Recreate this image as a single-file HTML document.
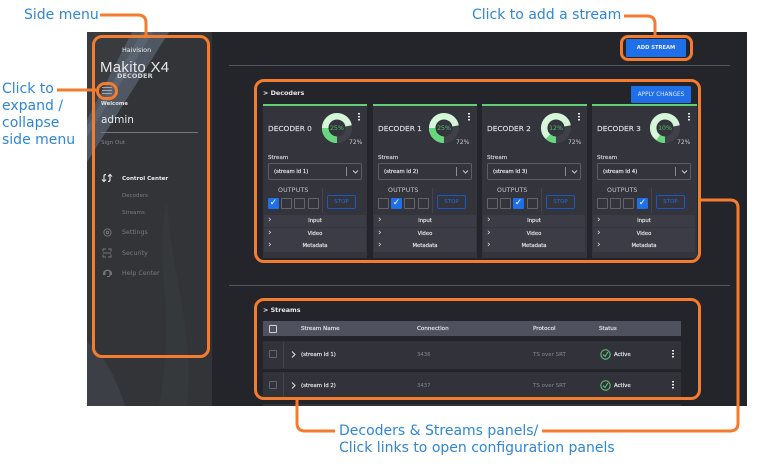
<!DOCTYPE html>
<html><head><meta charset="utf-8">
<style>
html,body{margin:0;padding:0;background:#fff}
body{width:774px;height:476px;position:relative;overflow:hidden;font-family:"DejaVu Sans","Liberation Sans",sans-serif}
div,span{position:absolute;white-space:nowrap;box-sizing:border-box}
.ann{color:#2e86d6;font-size:14px;line-height:17px;font-family:"DejaVu Sans",sans-serif}
.o{border:3px solid #f47c2e;border-radius:10px}
.card{top:104px;width:104px;height:154px;background:#34353c;border-top:2px solid #62cf74}
.dn{left:5px;top:18px;font-size:7.400px;color:#dcdce0;-webkit-text-stroke:.15px #dcdce0}
.pct{left:86px;top:33px;font-size:6px;color:#c8c8cc}
.st{left:5px;top:49px;font-size:5.600px;color:#d8d8dc;-webkit-text-stroke:.15px #d8d8dc}
.sel{left:5px;top:57px;width:94px;height:17px;border:1px solid #5c5d66;border-radius:2px}
.sel b{position:absolute;left:5px;top:5px;font-weight:normal;font-size:5.300px;color:#e4e4e8;white-space:nowrap;-webkit-text-stroke:.2px #e4e4e8}
.sel i{position:absolute;left:77px;top:3px;width:1px;height:9px;background:#8a8b92}
.out{left:15px;top:81px;font-size:6.200px;letter-spacing:.2px;color:#c8c8cc}
.cb{top:92px;width:11px;height:11px;border:1px solid #63646c;border-radius:1px}
.cb.on{background:#1f6fe8;border-color:#1f6fe8;color:#fff;font-size:9px;line-height:9px;text-align:center}
.vs{left:59px;top:82px;width:1px;height:25px;background:#44454c}
.stop{left:64px;top:89px;width:29px;height:14px;border:1px solid #1d57bf;border-radius:2px;color:#1f6fe8;font-size:5.500px;line-height:13px;text-align:center}
.acc{left:1px;width:102px;height:12px;background:#3b3c45;border-radius:1px;color:#e0e0e4;font-size:5.300px;line-height:13px;text-align:center;-webkit-text-stroke:.2px #e0e0e4}
.acc u{position:absolute;left:4px;top:-1px;text-decoration:none;font-size:9px;font-weight:normal;-webkit-text-stroke:0}
.dots{left:95px;top:7px;width:2px;height:8px;background:repeating-linear-gradient(#e8e8ea 0 1.500px,transparent 1.500px 3px)}
svg{position:absolute}
.row{left:263px;width:418px;height:28px;background:#32333a}
.row .c{left:6px;top:9px;width:8px;height:8px;border:1px solid #62636b;border-radius:1px}
.row .v{left:20px;top:1px;width:1px;height:26px;background:#45464d}
.row .nm{left:38px;top:11px;font-size:5.400px;color:#e4e4e8;-webkit-text-stroke:.2px #e4e4e8}
.row .cn{left:154px;top:11px;font-size:5.300px;color:#85868e}
.row .pr{left:270px;top:11px;font-size:5.500px;color:#85868e}
.row .ac{left:351px;top:11px;font-size:5.400px;color:#e4e4e8;-webkit-text-stroke:.2px #e4e4e8}
.row .dots{left:409px;top:9px;height:9px}
.th{top:326px;font-size:5.600px;color:#e0e0e4;-webkit-text-stroke:.2px #e0e0e4}
.menu{font-size:6.300px;color:#7a7b81}
</style></head><body>

<div style="left:87px;top:32px;width:660px;height:374px;background:#24252a"></div>

<div style="left:87px;top:32px;width:125px;height:374px;background:#333437;overflow:hidden">
<svg width="125" height="374" viewBox="0 0 125 374">
<polygon points="0,0 45,0 0,90" fill="#3a3b3f"/>
<polygon points="45,0 82,0 0,130 0,88" fill="#4f5862"/>
<polygon points="55,0 66,0 0,105 0,95" fill="#5f6a76" opacity=".7"/>
<path d="M80 170C66 230 90 280 72 374L100 374C108 300 84 240 80 170Z" fill="#3a3d41" opacity=".5"/>
<path d="M0 310C20 325 30 350 38 374L0 374Z" fill="#40454b" opacity=".7"/>
</svg>
</div>

<div style="left:122px;top:46px;font-size:6.400px;color:#f0f0f2">Haivision</div>
<div style="left:100px;top:59px;font-size:15px;color:#e8e8ea;font-family:'Liberation Sans',sans-serif;letter-spacing:.3px">Makito X4</div>
<div style="left:117px;top:72px;font-size:6.500px;font-weight:bold;color:#d4d4d8;letter-spacing:.1px">DECODER</div>
<div style="left:102px;top:87px;width:10px;height:1px;background:#a6a7ac"></div>
<div style="left:102px;top:90px;width:10px;height:1px;background:#a6a7ac"></div>
<div style="left:102px;top:93px;width:10px;height:1px;background:#a6a7ac"></div>
<div style="left:101px;top:101px;font-size:5.300px;font-weight:bold;color:#e0e0e4">Welcome</div>
<div style="left:101px;top:114px;font-size:10.500px;color:#e8e8ea">admin</div>
<div style="left:101px;top:132px;width:97px;height:1px;background:#75767c"></div>
<div style="left:101px;top:140px;font-size:5.600px;color:#85868c">Sign Out</div>

<svg style="left:101px;top:172px" width="12" height="12" viewBox="0 0 12 12" fill="none" stroke="#e0e0e4" stroke-width="1.200"><path d="M1 7.500L3 9.500L5 7.500M3 9.500V4C3 3 4 2.500 5 2.500M7 9.500C8 9.500 9 9 9 8V2.500M7 4.500L9 2.500L11 4.500"/></svg>
<div style="left:122px;top:176px;font-size:5.600px;font-weight:bold;color:#eeeef0">Control Center</div>
<div class="menu" style="left:122px;top:193px;font-size:5.500px">Decoders</div>
<div class="menu" style="left:122px;top:210px;font-size:5.500px">Streams</div>
<svg style="left:102px;top:227px" width="11" height="11" viewBox="0 0 11 11" fill="none" stroke="#74757b"><circle cx="5.500" cy="5.500" r="3.600"/><circle cx="5.500" cy="5.500" r="1.200"/></svg>
<div class="menu" style="left:122px;top:229px">Settings</div>
<svg style="left:102px;top:248px" width="10" height="10" viewBox="0 0 10 10" fill="none" stroke="#74757b"><path d="M1 3.500V1H4M6 1H9V3.500M1 6.500V9H4M6 9H9V6.500M1 5H9"/></svg>
<div class="menu" style="left:122px;top:250px">Security</div>
<svg style="left:102px;top:268px" width="11" height="11" viewBox="0 0 11 11" fill="#74757b"><path d="M1 5.500C1 0.500 10 0.500 10 5.500V7H8.500L8 9H5V8H7.500V4C7 2.500 4 2.500 3.500 4V7H1Z"/></svg>
<div class="menu" style="left:122px;top:270px">Help Center</div>

<div style="left:626px;top:39px;width:60px;height:18px;background:#1f6fe8;border-radius:1px;color:#e8f0ff;font-size:5.200px;font-weight:bold;line-height:19px;text-align:center">ADD STREAM</div>
<div style="left:229px;top:65px;width:501px;height:1px;background:#55565c"></div>
<div style="left:229px;top:285px;width:501px;height:1px;background:#55565c"></div>

<div style="left:263px;top:89px;font-size:6.400px;font-weight:bold;color:#e8e8ea">&gt; Decoders</div>
<div style="left:631px;top:86px;width:60px;height:17px;background:#1f6fe8;border-radius:1px;color:#dfe9ff;font-size:5.700px;line-height:18px;text-align:center">APPLY CHANGES</div>

<!-- card 0 -->
<div class="card" style="left:263px">
<div class="dn">DECODER 0</div><div class="dots"></div>
<svg style="left:58px;top:6px" width="32" height="32" viewBox="0 0 32 32" fill="none" stroke-width="6.500"><circle cx="16" cy="16" r="11.800" stroke="#3f4048"/><circle cx="16" cy="16" r="11.800" stroke="#d6f6da" pathLength="100" stroke-dasharray="72 100" transform="rotate(90 16 16)"/><circle cx="16" cy="16" r="11.800" stroke="#66d77c" pathLength="100" stroke-dasharray="25 100" transform="rotate(90 16 16)"/><text x="16" y="18" text-anchor="middle" font-size="6.200" stroke="none" fill="#4fc267" font-family="DejaVu Sans">25%</text></svg>
<div class="pct">72%</div><div class="st">Stream</div>
<div class="sel"><b>(stream id 1)</b><i></i><svg style="left:83px;top:5px" width="7" height="6" viewBox="0 0 7 6" fill="none" stroke="#c8c8cc"><path d="M1 1.500L3.500 4L6 1.500"/></svg></div>
<div class="out">OUTPUTS</div>
<div class="cb on" style="left:5px">✓</div><div class="cb" style="left:18px"></div><div class="cb" style="left:31px"></div><div class="cb" style="left:45px"></div>
<div class="vs"></div><div class="stop">STOP</div>
<div class="acc" style="top:109px"><u>›</u>Input</div><div class="acc" style="top:122px"><u>›</u>Video</div><div class="acc" style="top:134px"><u>›</u>Metadata</div>
</div>

<!-- card 1 -->
<div class="card" style="left:373px">
<div class="dn">DECODER 1</div><div class="dots"></div>
<svg style="left:55px;top:6px" width="32" height="32" viewBox="0 0 32 32" fill="none" stroke-width="6.500"><circle cx="16" cy="16" r="11.800" stroke="#3f4048"/><circle cx="16" cy="16" r="11.800" stroke="#d6f6da" pathLength="100" stroke-dasharray="72 100" transform="rotate(90 16 16)"/><circle cx="16" cy="16" r="11.800" stroke="#66d77c" pathLength="100" stroke-dasharray="25 100" transform="rotate(90 16 16)"/><text x="16" y="18" text-anchor="middle" font-size="6.200" stroke="none" fill="#4fc267" font-family="DejaVu Sans">25%</text></svg>
<div class="pct" style="left:83px">72%</div><div class="st">Stream</div>
<div class="sel"><b>(stream id 2)</b><i></i><svg style="left:83px;top:5px" width="7" height="6" viewBox="0 0 7 6" fill="none" stroke="#c8c8cc"><path d="M1 1.500L3.500 4L6 1.500"/></svg></div>
<div class="out">OUTPUTS</div>
<div class="cb" style="left:5px"></div><div class="cb on" style="left:18px">✓</div><div class="cb" style="left:31px"></div><div class="cb" style="left:45px"></div>
<div class="vs"></div><div class="stop">STOP</div>
<div class="acc" style="top:109px"><u>›</u>Input</div><div class="acc" style="top:122px"><u>›</u>Video</div><div class="acc" style="top:134px"><u>›</u>Metadata</div>
</div>

<!-- card 2 -->
<div class="card" style="left:482px;width:105px">
<div class="dn">DECODER 2</div><div class="dots" style="left:96px"></div>
<svg style="left:58px;top:6px" width="32" height="32" viewBox="0 0 32 32" fill="none" stroke-width="6.500"><circle cx="16" cy="16" r="11.800" stroke="#3f4048"/><circle cx="16" cy="16" r="11.800" stroke="#d6f6da" pathLength="100" stroke-dasharray="72 100" transform="rotate(90 16 16)"/><circle cx="16" cy="16" r="11.800" stroke="#66d77c" pathLength="100" stroke-dasharray="12 100" transform="rotate(90 16 16)"/><text x="16" y="18" text-anchor="middle" font-size="6.200" stroke="none" fill="#4fc267" font-family="DejaVu Sans">12%</text></svg>
<div class="pct">72%</div><div class="st">Stream</div>
<div class="sel"><b>(stream id 3)</b><i></i><svg style="left:83px;top:5px" width="7" height="6" viewBox="0 0 7 6" fill="none" stroke="#c8c8cc"><path d="M1 1.500L3.500 4L6 1.500"/></svg></div>
<div class="out">OUTPUTS</div>
<div class="cb" style="left:5px"></div><div class="cb" style="left:18px"></div><div class="cb on" style="left:31px">✓</div><div class="cb" style="left:45px"></div>
<div class="vs"></div><div class="stop">STOP</div>
<div class="acc" style="top:109px"><u>›</u>Input</div><div class="acc" style="top:122px"><u>›</u>Video</div><div class="acc" style="top:134px"><u>›</u>Metadata</div>
</div>

<!-- card 3 -->
<div class="card" style="left:592px;width:105px">
<div class="dn">DECODER 3</div><div class="dots" style="left:96px"></div>
<svg style="left:57px;top:6px" width="32" height="32" viewBox="0 0 32 32" fill="none" stroke-width="6.500"><circle cx="16" cy="16" r="11.800" stroke="#3f4048"/><circle cx="16" cy="16" r="11.800" stroke="#d6f6da" pathLength="100" stroke-dasharray="72 100" transform="rotate(90 16 16)"/><circle cx="16" cy="16" r="11.800" stroke="#66d77c" pathLength="100" stroke-dasharray="10 100" transform="rotate(90 16 16)"/><text x="16" y="18" text-anchor="middle" font-size="6.200" stroke="none" fill="#4fc267" font-family="DejaVu Sans">10%</text></svg>
<div class="pct" style="left:85px">72%</div><div class="st">Stream</div>
<div class="sel"><b>(stream id 4)</b><i></i><svg style="left:83px;top:5px" width="7" height="6" viewBox="0 0 7 6" fill="none" stroke="#c8c8cc"><path d="M1 1.500L3.500 4L6 1.500"/></svg></div>
<div class="out">OUTPUTS</div>
<div class="cb" style="left:5px"></div><div class="cb" style="left:18px"></div><div class="cb" style="left:31px"></div><div class="cb on" style="left:45px">✓</div>
<div class="vs"></div><div class="stop">STOP</div>
<div class="acc" style="top:109px"><u>›</u>Input</div><div class="acc" style="top:122px"><u>›</u>Video</div><div class="acc" style="top:134px"><u>›</u>Metadata</div>
</div>

<!-- streams -->
<div style="left:263px;top:306px;font-size:6.400px;font-weight:bold;color:#e8e8ea">&gt; Streams</div>
<div style="left:263px;top:321px;width:418px;height:15px;background:#50515f"></div>
<div style="left:269px;top:325px;width:8px;height:8px;border:1px solid #d0d0d4;border-radius:1px"></div>
<div class="th" style="left:301px">Stream Name</div>
<div class="th" style="left:417px">Connection</div>
<div class="th" style="left:533px">Protocol</div>
<div class="th" style="left:599px">Status</div>

<div class="row" style="top:341px"><div class="c"></div><div class="v"></div><svg style="left:28px;top:10px" width="5" height="7" viewBox="0 0 5 7" fill="none" stroke="#e6e6e8"><path d="M1 0.500L4 3.500L1 6.500"/></svg><div class="nm">(stream id 1)</div><div class="cn">3436</div><div class="pr">TS over SRT</div><svg style="left:337px;top:7.500px" width="11" height="11" viewBox="0 0 11 11" fill="none" stroke="#5fd07a"><circle cx="5.500" cy="5.500" r="4.700"/><path d="M3 5.500L5 7.500L8 3"/></svg><div class="ac">Active</div><div class="dots"></div></div>
<div class="row" style="top:372px"><div class="c"></div><div class="v"></div><svg style="left:28px;top:10px" width="5" height="7" viewBox="0 0 5 7" fill="none" stroke="#e6e6e8"><path d="M1 0.500L4 3.500L1 6.500"/></svg><div class="nm">(stream id 2)</div><div class="cn">3437</div><div class="pr">TS over SRT</div><svg style="left:337px;top:7.500px" width="11" height="11" viewBox="0 0 11 11" fill="none" stroke="#5fd07a"><circle cx="5.500" cy="5.500" r="4.700"/><path d="M3 5.500L5 7.500L8 3"/></svg><div class="ac">Active</div><div class="dots"></div></div>
<div class="row" style="top:404px;height:2px"></div>

<!-- orange annotations -->
<div class="o" style="left:92px;top:35px;width:118px;height:323px"></div>
<div style="left:96px;top:82px;width:22px;height:18px;border:3px solid #f47c2e;border-radius:9px"></div>
<div class="o" style="left:620px;top:35px;width:73px;height:26px;border-radius:8px"></div>
<div class="o" style="left:254px;top:79px;width:447px;height:184px"></div>
<div class="o" style="left:254px;top:298px;width:447px;height:102px"></div>
<svg style="left:0;top:0" width="774" height="476" viewBox="0 0 774 476" fill="none" stroke="#f47c2e" stroke-width="3">
<path d="M100 15H138Q146 15 146 23V36"/>
<path d="M57 90H96"/>
<path d="M624 16H647Q655 16 655 24V36"/>
<path d="M701 200H730Q738 200 738 208V423Q738 431 730 431H542"/>
<path d="M297 400V423Q297 431 305 431H335"/>
</svg>

<div class="ann" style="left:24px;top:7px">Side menu</div>
<div class="ann" style="left:2px;top:81px">Click to<br>expand /<br>collapse<br>side menu</div>
<div class="ann" style="left:472px;top:7px">Click to add a stream</div>
<div class="ann" style="left:339px;top:423px">Decoders &amp; Streams panels/<br>Click links to open configuration panels</div>
</body></html>
